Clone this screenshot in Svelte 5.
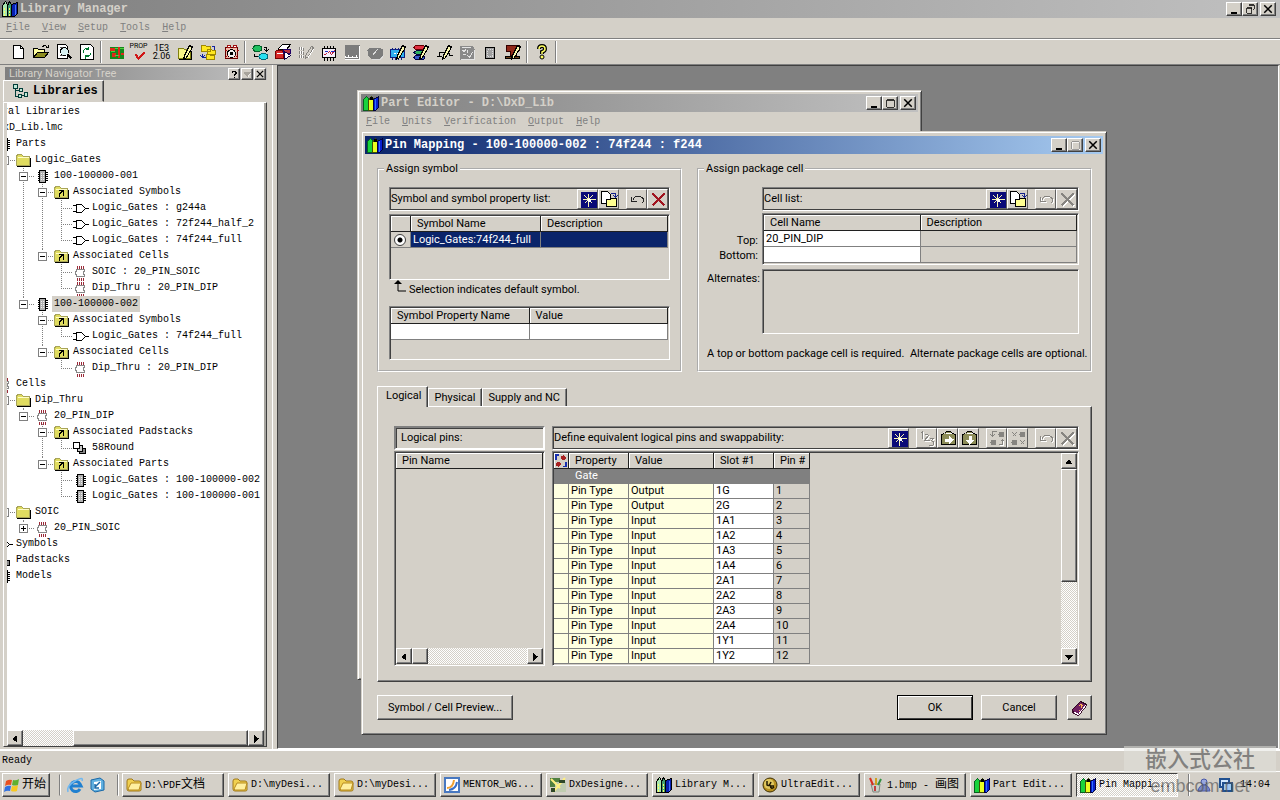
<script lang="ts">
  type Node = { d: number; icon: string; text: string; box?: string; selected?: boolean };

  const tree: Node[] = [
    { d: 0, icon: '', text: 'Central Libraries' },
    { d: 1, icon: '', text: 'DxD_Lib.lmc' },
    { d: 2, icon: 'chip', text: 'Parts' },
    { d: 3, icon: 'folder', text: 'Logic_Gates', box: '-' },
    { d: 4, icon: 'chip', text: '100-100000-001', box: '-' },
    { d: 5, icon: 'link', text: 'Associated Symbols', box: '-' },
    { d: 6, icon: 'gate', text: 'Logic_Gates : g244a' },
    { d: 6, icon: 'gate', text: 'Logic_Gates : 72f244_half_2' },
    { d: 6, icon: 'gate', text: 'Logic_Gates : 74f244_full' },
    { d: 5, icon: 'link', text: 'Associated Cells', box: '-' },
    { d: 6, icon: 'cell', text: 'SOIC : 20_PIN_SOIC' },
    { d: 6, icon: 'cell', text: 'Dip_Thru : 20_PIN_DIP' },
    { d: 4, icon: 'chip', text: '100-100000-002', box: '-', selected: true },
    { d: 5, icon: 'link', text: 'Associated Symbols', box: '-' },
    { d: 6, icon: 'gate', text: 'Logic_Gates : 74f244_full' },
    { d: 5, icon: 'link', text: 'Associated Cells', box: '-' },
    { d: 6, icon: 'cell', text: 'Dip_Thru : 20_PIN_DIP' },
    { d: 2, icon: 'cell', text: 'Cells' },
    { d: 3, icon: 'folder', text: 'Dip_Thru', box: '-' },
    { d: 4, icon: 'cell', text: '20_PIN_DIP', box: '-' },
    { d: 5, icon: 'link', text: 'Associated Padstacks', box: '-' },
    { d: 6, icon: 'pads', text: '58Round' },
    { d: 5, icon: 'link', text: 'Associated Parts', box: '-' },
    { d: 6, icon: 'chip', text: 'Logic_Gates : 100-100000-002' },
    { d: 6, icon: 'chip', text: 'Logic_Gates : 100-100000-001' },
    { d: 3, icon: 'folder', text: 'SOIC', box: '-' },
    { d: 4, icon: 'cell', text: '20_PIN_SOIC', box: '+' },
    { d: 2, icon: 'gate', text: 'Symbols' },
    { d: 2, icon: 'pads', text: 'Padstacks' },
    { d: 2, icon: 'chip', text: 'Models' }
  ];

  // true when another node follows at this depth under the same parent
  function continues(i: number, depth: number) {
    for (let k = i + 1; k < tree.length; k++) {
      if (tree[k].d < depth) return false;
      if (tree[k].d === depth) return true;
    }
    return false;
  }

  const toolGroups = [
    ['new', 'open', 'preview', 'refresh'],
    ['board', 'prop', 'units', 'editFolder', 'copyFolder', 'camera'],
    ['swap', 'import', 'ibis', 'scope', 'plot', 'pie', 'partEdit', 'stackEdit', 'symEdit', 'script', 'cellBox', 'padEdit'],
    ['help']
  ];
  const toolNames: Record<string, string> = {
    new: 'New', open: 'Open', preview: 'Preview', refresh: 'Refresh', board: 'Board', prop: 'Properties',
    units: 'Units', editFolder: 'Edit partitions', copyFolder: 'Copy partitions', camera: 'Snapshot',
    swap: 'Library services', import: 'Import', ibis: 'IBIS editor', scope: 'Simulate', plot: 'Plot',
    pie: 'Analyze', partEdit: 'Part editor', stackEdit: 'Padstack editor', symEdit: 'Symbol editor',
    script: 'Script', cellBox: 'Cell', padEdit: 'Cell editor', help: 'Help'
  };

  const pins = ['1G', '2G', '1A1', '1A2', '1A3', '1A4', '2A1', '2A2', '2A3', '2A4', '1Y1', '1Y2'];

  const tasks = [
    { icon: 'folderBig', text: 'D:\\PDF', cjk: '文档' },
    { icon: 'folderBig', text: 'D:\\myDesi...' },
    { icon: 'folderBig', text: 'D:\\myDesi...' },
    { icon: 'mentor', text: 'MENTOR_WG...' },
    { icon: 'dx', text: 'DxDesigne...' },
    { icon: 'books', text: 'Library M...' },
    { icon: 'ultra', text: 'UltraEdit...' },
    { icon: 'paint', text: '1.bmp - ', cjk: '画图' },
    { icon: 'books2', text: 'Part Edit...' },
    { icon: 'books2', text: 'Pin Mappi...', active: true }
  ];

  const pencil = '<path d="M12 1l3 2-6 10-3 2 1-4z" fill="#fbf8b0" stroke="#000"/><path d="M12 1l3 2" stroke="#000" stroke-width="2"/>';
  const folder = '<path d="M1 4l1-2h4l2 2h6v9H1z" fill="#e0dc60" stroke="#a8a458"/><path d="M2 5h11" stroke="#fffdc8"/><path d="M1 14h14V5" fill="none" stroke="#000"/>';

  const icons: Record<string, string> = {
    folder,
    link: folder + '<path d="M5 6h5v5M10 6l-4 4v2M9 6l-4 4" fill="none" stroke="#000"/>',
    chip: '<rect x="5" y="2" width="6" height="12" fill="#b0b0b0" stroke="#000"/><path d="M3 4h2M3 6h2M3 8h2M3 10h2M3 12h2M11 4h2M11 6h2M11 8h2M11 10h2M11 12h2" stroke="#000"/><path d="M7 4v8M9 4v8" stroke="#eee" stroke-dasharray="1 1"/>',
    gate: '<path d="M0 5h5M0 11h5M13 8h3" stroke="#000"/><path d="M4 4h5l4 4-4 4H4z" fill="#fff" stroke="#000"/>',
    cell: '<path d="M5 1v3M7 1v3M9 1v3M11 1v3M5 13v3M7 13v3M9 13v3M11 13v3" stroke="#9a2a38"/><path d="M4 5h8v2h-1v3h1v2H4v-2H3V7h1z" fill="#fff" stroke="#888"/>',
    pads: '<rect x="7" y="8" width="6" height="5" fill="#888" stroke="#000"/><rect x="5" y="5" width="5" height="6" fill="#ccc" stroke="#000"/><rect x="1" y="2" width="6" height="6" fill="#fff" stroke="#000"/>',
    libs: '<path d="M1 1h4v4H1zM7 5h3v3H7zM12 9h3v4h-3zM6 11h3v3H6z" fill="#bfe8d8" stroke="#003c38"/><path d="M3 5v8h3M3 7h4M9 12h3" fill="none" stroke="#003c38"/>',
    books: '<path d="M0 4l3-4 2 3v12H0z" fill="#a8e8b0" stroke="#000"/><path d="M5 4l2-4 2 3v12H5z" fill="#3f9c70" stroke="#000"/><path d="M7 6v8M2 6v8" stroke="#ffff60" stroke-dasharray="2 1"/><path d="M9 3l6-2v11l-3 3H9z" fill="#0820b0" stroke="#000"/><path d="M13 3v10" stroke="#4070ff"/>',
    books2: '<path d="M0 4l3-3 2 2v12H0z" fill="#19d33c" stroke="#086020"/><path d="M5 5l3-4 2 2v12H5z" fill="#eaff20" stroke="#405000"/><path d="M6 1h3v3H6z" fill="#000"/><path d="M10 4l5-3v11l-3 3h-2z" fill="#0820d0" stroke="#000040"/><path d="M12 3v11" stroke="#3070ff"/>',
    new: '<path d="M3 1h7l3 3v10H3z" fill="#fff" stroke="#000"/><path d="M10 1v3h3" fill="none" stroke="#000"/>',
    open: '<path d="M0 13V4h4l1 1h6v3" fill="#ffffa0" stroke="#000"/><path d="M0 13l4-5h11l-4 5z" fill="#8c8c20" stroke="#000"/><path d="M9 2q3-2 5 1M15 0v3h-3" fill="none" stroke="#000"/>',
    preview: '<path d="M1 0h8l2 2v12H1z" fill="#fff" stroke="#000"/><path d="M3 3h4M3 5h2M3 11h3" stroke="#555"/><circle cx="8" cy="7" r="4" fill="#d8f0f0" stroke="#000"/><path d="M11 10l4 4" stroke="#000" stroke-width="2"/>',
    refresh: '<path d="M1 0h10l3 3v12H1z" fill="#fff" stroke="#000"/><path d="M4 8V6q2-3 5-1M9 2v3H6M11 8v2q-2 3-5 1M6 14v-3h3" fill="none" stroke="#007830"/>',
    board: '<path d="M1 2h14v12H1z" fill="#15881c"/><path d="M1 3h5v3H1zM9 2h2v11H9zM3 8h4v4H3zM12 8h3v2h-3z" fill="#e02818"/><path d="M6 4h3M6 11h4M11 4h4M2 7h4" stroke="#50d040"/>',
    prop: '<path d="M4 10l3 4 6-6" fill="none" stroke="#d01818" stroke-width="2"/>',
    units: '',
    editFolder: '<path d="M1 4h5l1 1h6v9H1z" fill="#f8f488" stroke="#808010"/><path d="M1 15h13V6" stroke="#000" fill="none"/>' + pencil,
    copyFolder: '<path d="M1 1h4l1 1h4v5H1zM7 5h4l1 1h3v4H7zM6 10h3l1 1h4v4H6z" fill="#ffe820" stroke="#a08800"/><path d="M11 2h3v3M2 9v4h3M0 11l2 2 2-2" fill="none" stroke="#1020a0"/>',
    camera: '<path d="M2 3h12v11H2z" fill="#f0b8a8" stroke="#600"/><circle cx="8" cy="9" r="4" fill="#eee" stroke="#000"/><circle cx="8" cy="9" r="1.5" fill="#000"/><path d="M4 1h3v2H4zM10 1h3v2h-3zM1 6h2M13 6h2M1 14l3-3M15 14l-3-3" stroke="#a01010" fill="#fff"/>',
    swap: '<ellipse cx="5" cy="4" rx="4.5" ry="3" fill="#20c060" stroke="#006028"/><ellipse cx="11" cy="12" rx="4.5" ry="3" fill="#28e0f0" stroke="#006878"/><path d="M11 3h3v3M5 12H2V9M12 5l2 2 2-2" fill="none" stroke="#000"/>',
    import: '<path d="M3 4l4-4h8l-4 5H3z" fill="#fff" stroke="#000"/><path d="M0 7q4-3 8 0v7H0z" fill="#d82828" stroke="#700"/><path d="M1 9h6" stroke="#fff"/><path d="M8 5h7v4H8z" fill="#b83040" stroke="#206"/><path d="M9 7l6 4-6 4z" fill="#fff" stroke="#104"/>',
    ibis: '<path d="M1 2v12M3 2v12M5 3v10" stroke="#868480" stroke-dasharray="3 1"/><path d="M2 2v12M4 2v12" stroke="#fff" stroke-dasharray="3 1"/><path d="M13 2l2 1-5 9-3 2v-3z" fill="#d4d0c8" stroke="#868480"/><path d="M9 14l6-9" stroke="#fff"/>',
    scope: '<path d="M3 1v3M6 1v3M9 1v3M12 1v3M3 13v3M6 13v3M9 13v3M12 13v3" stroke="#000"/><path d="M1 4h13v9H1z" fill="#f4f0fa" stroke="#000"/><path d="M3 10l3-1 2-2 2 3 3-4" fill="none" stroke="#c02040"/><path d="M3 7h3M9 7h4" stroke="#2030c0"/>',
    plot: '<path d="M0 0h15v15H0z" fill="#7c7c7c"/><path d="M1 13v-2M4 13v-3M6 13v-1M8 13v-2M10 13v-1M12 13v-3M1 13h12M0 15h15V1" fill="none" stroke="#fff"/>',
    pie: '<path d="M2 3h10l3 2v6l-3 4H4l-4-4V6z" fill="#7c7c7c"/><path d="M5 11l5-6M4 15h9l3-4" fill="none" stroke="#ddd"/>',
    partEdit: '<path d="M2 3v12M5 3v12M8 3v12M11 3v12" stroke="#102080"/><path d="M0 5h14v8H0z" fill="#30b0f0" stroke="#102080"/><path d="M3 9h8" stroke="#fff" stroke-dasharray="2 1"/>' + pencil,
    stackEdit: '<ellipse cx="6" cy="3" rx="5.5" ry="2.5" fill="#e03040" stroke="#600"/><ellipse cx="6" cy="8" rx="5.5" ry="2" fill="#30b060" stroke="#004"/><ellipse cx="6" cy="13" rx="5.5" ry="2.5" fill="#3858c8" stroke="#004"/>' + pencil,
    symEdit: '<path d="M0 12h5M3 12V8h4M11 9h2v2h3" fill="none" stroke="#000"/>' + pencil,
    script: '<path d="M0 1h13l2 4v10H1z" fill="#8a8a8a"/><path d="M2 3h9M3 6l2 1 1-2M8 5v3M3 10h3M8 11l2 2 3-5M15 5v10H1" fill="none" stroke="#e4e4e4"/>',
    cellBox: '<path d="M3 3h9v11H3z" fill="#a0a0a0" stroke="#000"/><path d="M5 5h5v7H5z" fill="none" stroke="#ddd" stroke-dasharray="1 1"/>',
    padEdit: '<path d="M1 1h13v5h-3v5H5V7H1z" fill="#902818" stroke="#300"/><path d="M0 12h14v2H0z" fill="#704018" stroke="#000"/>' + pencil,
    help: '<path d="M5 5q0-3 3-3t3 3q0 2-3 3v2" fill="none" stroke="#000" stroke-width="4"/><circle cx="8" cy="13" r="2" fill="#ffff60" stroke="#000"/><path d="M5 5q0-3 3-3t3 3q0 2-3 3v2" fill="none" stroke="#ffff60" stroke-width="1.5"/>',
    star: '<path d="M0 0h16v16H0z" fill="#0a0a78"/><path d="M8 2v13M2 8h13M4 4l8 8M12 4l-8 8" stroke="#f8f4b0"/><path d="M7 7h3v3H7z" fill="#fff"/>',
    copy: '<path d="M0 0h6l3 3v9H0z" fill="#fff" stroke="#000"/><path d="M5 8h4l1-1h5v8H5z" fill="#ffff90" stroke="#000"/><path d="M9 2h5v4M12 4l2 2 2-2" fill="none" stroke="#10208c"/>',
    undo: '<path d="M3 9q3-6 8-4t2 7M2 5v5h5" fill="none" stroke="#222"/>',
    undoOff: '<path d="M4 10q3-6 8-4t2 7M3 6v5h5" fill="none" stroke="#fff"/><path d="M3 9q3-6 8-4t2 7M2 5v5h5" fill="none" stroke="#868480"/>',
    del: '<path d="M2 2l12 12M14 2L2 14" stroke="#a01420" stroke-width="2"/>',
    delOff: '<path d="M3 3l12 12M15 3L3 15" stroke="#fff" stroke-width="1.5"/><path d="M2 2l12 12M14 2L2 14" stroke="#868480" stroke-width="1.5"/>',
    numOff: '<g fill="none"><path d="M1 3l2-2v7M5 5q3-3 4 0l-4 5h5M10 8h4l-2 2q4 2 1 5h-4" stroke="#fff" transform="translate(1 1)"/><path d="M1 3l2-2v7M5 5q3-3 4 0l-4 5h5M10 8h4l-2 2q4 2 1 5h-4" stroke="#868480"/></g>',
    clipR: '<path d="M1 4l3-1 2-2h4l2 2 3 1v10H1z" fill="#8c8c58" stroke="#000"/><path d="M5 3h6" stroke="#fff"/><path d="M4 8h4V5l5 4-5 5v-3H4z" fill="#fff"/>',
    clipD: '<path d="M1 4l3-1 2-2h4l2 2 3 1v10H1z" fill="#8c8c58" stroke="#000"/><path d="M5 3h6" stroke="#fff"/><path d="M7 5h3v4h3l-5 5-4-5h3z" fill="#fff"/>',
    swapOff: '<circle cx="12" cy="4" r="3" fill="#868480"/><circle cx="4" cy="12" r="3" fill="#868480"/><path d="M7 1H3v5M1 4l2 2 2-2M9 14h4V9M11 11l2-2 2 2" fill="none" stroke="#868480"/><path d="M10 15h4v-5" fill="none" stroke="#fff"/>',
    unswapOff: '<circle cx="12" cy="4" r="3" fill="#868480"/><circle cx="4" cy="12" r="3" fill="#868480"/><path d="M2 2l4 4M6 2L2 6M10 10l4 4M14 10l-4 4" stroke="#868480"/>',
    equiv: '<circle cx="11" cy="4" r="3" fill="#a82020"/><circle cx="5" cy="12" r="3" fill="#a82020"/><path d="M6 1H2v6M10 15h4V9" fill="none" stroke="#1830b0" stroke-width="2"/>',
    bookHelp: '<path d="M1 9l8-8 6 3-8 10-5-2z" fill="#702060" stroke="#300820"/><path d="M1 11l1 2 5 2 8-10V4" fill="none" stroke="#401030"/><path d="M3 12l4 2 7-9" fill="none" stroke="#fff"/><path d="M7 6l2-2 2 1-2 3M8 9v1" fill="none" stroke="#ffb050"/>',
    flag: '<path d="M2 4q3-2 6-1L7 8Q4 7 1 9z" fill="#e85020"/><path d="M9 3q3 1 6-1l-1 6q-3 1-6 0z" fill="#60b030"/><path d="M1 10q3-2 6-1l-1 5Q3 13 0 15z" fill="#3070e0"/><path d="M8 9q3 1 6-1l-1 6q-3 1-6 0z" fill="#f8c820"/>',
    ie: '<path d="M13 12a5 5 0 1 1 0-5l1 2H5" fill="none" stroke="#2080d0" stroke-width="3"/><path d="M1 15Q-1 9 8 4t7 0" fill="none" stroke="#70b8f0" stroke-width="1.5"/>',
    desk: '<path d="M2 3l9-2 4 3v9l-9 2-4-3z" fill="#60b0e0" stroke="#1868a8"/><path d="M5 5l7-1v8l-7 1z" fill="#fff"/><path d="M6 10l5-5M6 7v4h4" fill="none" stroke="#1868a8" stroke-width="1.5"/>',
    folderBig: '<path d="M1 4q0-2 2-2h3l2 2h5q2 0 2 2v7q0 1-2 1H3q-2 0-2-2z" fill="#f0d050" stroke="#a07818"/><path d="M2 12l3-6h10l-2 7H3z" fill="#fff0a0" stroke="#b88c20"/>',
    mentor: '<path d="M1 1h14v14H1z" fill="#fff" stroke="#4878c0" stroke-width="2"/><path d="M3 11Q9 11 10 3" fill="none" stroke="#f0a030" stroke-width="2"/><path d="M5 13q7-1 8-8" fill="none" stroke="#3870c8" stroke-width="2"/>',
    dx: '<path d="M0 1h10v9H0z" fill="#508040"/><path d="M5 5h11v10H5z" fill="#c0ccb0"/><path d="M1 2l9 9M15 1L3 15" stroke="#fff080" stroke-width="2"/><path d="M9 3h6v3H9zM1 11h4v4H1z" fill="#304828"/>',
    ultra: '<circle cx="8" cy="8" r="7" fill="#b89020" stroke="#403000"/><circle cx="7" cy="7" r="5" fill="#e0c860"/><path d="M5 4v4q2 2 4-3M8 8q1 5 4 2M9 9h3" fill="none" stroke="#201800" stroke-width="1.5"/>',
    paint: '<path d="M3 7h9l-1 8H5z" fill="#c8d0c8" stroke="#808880"/><path d="M5 8L2 1" stroke="#d83020" stroke-width="2"/><path d="M8 8V1" stroke="#d0a020" stroke-width="2"/><path d="M10 8l3-6" stroke="#309040" stroke-width="2"/><path d="M7 9v5" stroke="#c04040" stroke-width="2"/>',
    tray1: '<circle cx="8" cy="5" r="3" fill="#98a8e0" stroke="#4858a8"/><path d="M2 14q1-6 6-6t6 6z" fill="#7888c8" stroke="#4858a8"/>',
    tray2: '<path d="M2 2h9v8H2z" fill="#d0e8ff" stroke="#205090" stroke-width="2"/><path d="M5 6h9v8H5z" fill="#a0c8f0" stroke="#205090" stroke-width="2"/>',
    min: '<path d="M4 12h7v2H4z"/>',
    max: '<path d="M3 3h10v10H3z" fill="none" stroke="#000"/><path d="M3 4h10" stroke="#000"/>',
    maxOff: '<path d="M4 4h10v10H4z" fill="none" stroke="#fff"/><path d="M3 3h10v10H3z" fill="none" stroke="#808080"/>',
    restore: '<path d="M6 2h7v6h-2M3 6h7v7H3z" fill="none" stroke="#000"/><path d="M6 3h7M3 7h7" stroke="#000"/>',
    close: '<path d="M3 3l10 10M13 3L3 13" stroke="#000" stroke-width="2"/>',
    up: '<path d="M8 5l5 6H3z"/>',
    down: '<path d="M3 6h10l-5 6z"/>',
    downOff: '<path d="M2 5h12l-6 7z" fill="#a8a49c"/><path d="M14 6l-6 7" stroke="#fff"/>',
    left: '<path d="M11 3v10L5 8z"/>',
    right: '<path d="M6 3v10l6-5z"/>',
    ask: '<path d="M5 6q0-3 3-3t3 3q0 1-3 3v2M8 12v2" fill="none" stroke="#000" stroke-width="2"/>'
  };

  // photographic style icons keep smooth edges, the rest is pixel art
  const smooth = ['flag', 'ie', 'desk', 'folderBig', 'mentor', 'dx', 'ultra', 'paint', 'tray1', 'tray2', 'close', 'help'];

  let tab = $state('Logical');
</script>

{#snippet icon(name: string)}
  <svg class="icon" class:smooth={smooth.includes(name)} viewBox={smooth.includes(name) ? '0 0 16 16' : '-0.5 -0.5 16 16'} aria-hidden="true">{@html icons[name]}</svg>
{/snippet}

{#snippet caption(names: string[])}
  <div class="caption">
    {#each names as n}
      <button aria-label={n}>{@render icon(n)}</button>
    {/each}
  </div>
{/snippet}

{#snippet bar(groups: string[][])}
  {#each groups as group}
    <div class="bar-group">
      {#each group as n}
        <button class="bar-button" aria-label={n}>{@render icon(n)}</button>
      {/each}
    </div>
  {/each}
{/snippet}

<div class="screen">
  <header class="title idle main-title">
    {@render icon('books')}
    <h1>Library Manager</h1>
    {@render caption(['min', 'restore', 'close'])}
  </header>
  <nav class="menu">
    {#each ['File', 'View', 'Setup', 'Tools', 'Help'] as m}
      <button><u>{m[0]}</u>{m.slice(1)}</button>
    {/each}
  </nav>
  <div class="toolbar">
    {#each toolGroups as group}
      <div class="tool-group">
        {#each group as t}
          <button aria-label={toolNames[t]}>
            {#if t === 'prop'}
              <span class="tiny">PROP</span>
            {:else if t === 'units'}
              <span class="two-line">1E3<br />2.06</span>
            {/if}
            {#if t !== 'units'}{@render icon(t)}{/if}
          </button>
        {/each}
      </div>
    {/each}
  </div>

  <div class="middle">
    <aside class="dock">
      <div class="dock-title">
        <span>Library Navigator Tree</span>
        {@render caption(['ask', 'downOff', 'close'])}
      </div>
      <button class="dock-tab">{@render icon('libs')}Libraries</button>
      <div class="dock-page">
        <div class="tree">
          {#each tree as node, i}
            <div class="node">
              {#each Array(node.d) as _, k}
                <span class="guide" class:line={k > 1 && continues(i, k)}></span>
              {/each}
              <span class="joint" class:more={continues(i, node.d)} class:root={node.d < 3}>
                {#if node.box}<span class="box" class:plus={node.box === '+'}></span>{/if}
              </span>
              {@render icon(node.icon)}
              <span class="label" class:selected={node.selected}>{node.text}</span>
            </div>
          {/each}
        </div>
        <div class="scroll-h">
          <button aria-label="Scroll left">{@render icon('left')}</button>
          <div class="track"><div class="thumb dock-thumb"></div></div>
          <button aria-label="Scroll right">{@render icon('right')}</button>
        </div>
      </div>
    </aside>

    <main class="workspace">
      <section class="window editor">
        <div class="title idle">
          {@render icon('books2')}
          <h2>Part Editor - D:\DxD_Lib</h2>
          {@render caption(['min', 'max', 'close'])}
        </div>
        <nav class="menu">
          {#each ['File', 'Units', 'Verification', 'Output', 'Help'] as m}
            <button><u>{m[0]}</u>{m.slice(1)}</button>
          {/each}
        </nav>
      </section>

      <section class="window mapping">
        <div class="title">
          {@render icon('books2')}
          <h2>Pin Mapping - 100-100000-002 : 74f244 : f244</h2>
          {@render caption(['min', 'maxOff', 'close'])}
        </div>
        <div class="body">
          <div class="groups">
            <fieldset>
              <legend>Assign symbol</legend>
              <div class="sunken bar">
                <span>Symbol and symbol property list:</span>
                {@render bar([['star', 'copy'], ['undo', 'del']])}
              </div>
              <div class="sunken symbols">
                <table>
                  <colgroup><col class="c-radio" /><col class="c-name" /><col /></colgroup>
                  <thead><tr><th></th><th>Symbol Name</th><th>Description</th></tr></thead>
                  <tbody>
                    <tr class="picked">
                      <td class="pick"><input type="radio" name="default" aria-label="Default symbol" checked /></td>
                      <td>Logic_Gates:74f244_full</td>
                      <td></td>
                    </tr>
                  </tbody>
                </table>
              </div>
              <div class="hint">
                <svg viewBox="0 0 12 14" aria-hidden="true"><path d="M4 1v10h8" fill="none" stroke="#000" stroke-width="1" /><path d="M4 0l4 4H0z" /></svg>
                Selection indicates default symbol.
              </div>
              <div class="sunken props">
                <table>
                  <thead><tr><th>Symbol Property Name</th><th>Value</th></tr></thead>
                  <tbody><tr class="white"><td></td><td></td></tr></tbody>
                </table>
              </div>
            </fieldset>

            <fieldset class="package">
              <legend>Assign package cell</legend>
              <div class="package-grid">
                <span></span>
                <div class="sunken bar">
                  <span>Cell list:</span>
                  {@render bar([['star', 'copy'], ['undoOff', 'delOff']])}
                </div>
                <div class="row-labels"><span>Top:</span><span>Bottom:</span></div>
                <div class="sunken cells">
                  <table>
                    <thead><tr><th>Cell Name</th><th>Description</th></tr></thead>
                    <tbody>
                      <tr><td class="white">20_PIN_DIP</td><td></td></tr>
                      <tr><td class="white"></td><td></td></tr>
                    </tbody>
                  </table>
                </div>
                <span class="alt-label">Alternates:</span>
                <div class="sunken alternates"></div>
              </div>
              <p>A top or bottom package cell is required.&nbsp; Alternate package cells are optional.</p>
            </fieldset>
          </div>

          <div class="tabs" role="tablist">
            {#each ['Logical', 'Physical', 'Supply and NC'] as t}
              <button role="tab" aria-selected={tab === t} class:current={tab === t} onclick={() => (tab = t)}>{t}</button>
            {/each}
          </div>
          <div class="panel">
            <div class="pins">
              <div class="sunken bar logical">Logical pins:</div>
              <div class="sunken pin-list">
                <table><thead><tr><th>Pin Name</th></tr></thead></table>
                <div class="scroll-h">
                  <button aria-label="Scroll left">{@render icon('left')}</button>
                  <div class="track"><div class="thumb pin-thumb"></div></div>
                  <button aria-label="Scroll right">{@render icon('right')}</button>
                </div>
              </div>
            </div>
            <div class="define">
              <div class="sunken bar">
                <span>Define equivalent logical pins and swappability:</span>
                {@render bar([['star'], ['numOff', 'clipR', 'clipD'], ['swapOff', 'unswapOff'], ['undoOff', 'delOff']])}
              </div>
              <div class="sunken slots">
                <table>
                  <colgroup><col class="c-mark" /><col class="c-prop" /><col class="c-value" /><col class="c-slot" /><col class="c-pin" /></colgroup>
                  <thead>
                    <tr><th class="mark">{@render icon('equiv')}</th><th>Property</th><th>Value</th><th>Slot #1</th><th>Pin #</th></tr>
                  </thead>
                  <tbody>
                    <tr class="gate-row"><td></td><td colspan="4">Gate</td></tr>
                    {#each pins as pin, i}
                      <tr>
                        <td class="cream"></td>
                        <td class="cream">Pin Type</td>
                        <td class="cream">{i < 2 ? 'Output' : 'Input'}</td>
                        <td class="white">{pin}</td>
                        <td>{i + 1}</td>
                      </tr>
                    {/each}
                  </tbody>
                </table>
                <div class="scroll-v">
                  <button aria-label="Scroll up">{@render icon('up')}</button>
                  <div class="track"><div class="thumb"></div></div>
                  <button aria-label="Scroll down">{@render icon('down')}</button>
                </div>
              </div>
            </div>
          </div>

          <div class="actions">
            <button class="push wide">Symbol / Cell Preview...</button>
            <span class="spacer"></span>
            <button class="push default">OK</button>
            <button class="push">Cancel</button>
            <button class="push square" aria-label="Help">{@render icon('bookHelp')}</button>
          </div>
        </div>
      </section>
    </main>
  </div>

  <div class="status">Ready</div>
  <footer class="taskbar">
    <button class="start">{@render icon('flag')}开始</button>
    <div class="quick">
      <button aria-label="Internet Explorer">{@render icon('ie')}</button>
      <button aria-label="Show desktop">{@render icon('desk')}</button>
    </div>
    <div class="tasks">
      {#each tasks as t}
        <button class:active={t.active}>{@render icon(t.icon)}<span>{t.text}{#if t.cjk}<span class="cjk">{t.cjk}</span>{/if}</span></button>
      {/each}
    </div>
    <div class="tray">
      {@render icon('tray1')}
      {@render icon('tray2')}
      <time>14:04</time>
    </div>
  </footer>
  <div class="watermark">
    <strong>嵌入式公社</strong>
    <span>embcom.net</span>
  </div>
</div>

<style>
  :global(body) {
    background: #d4d0c8;
  }
  .screen {
    --face: #d4d0c8;
    --mono: "Liberation Mono", "Noto Sans CJK SC", monospace;
    --sans: Roboto, "Liberation Sans", sans-serif;
    position: relative;
    display: flex;
    flex-direction: column;
    min-height: 100vh;
    background: var(--face);
    color: #000;
    font: 10px/16px var(--mono);
    overflow: hidden;
  }
  .screen :global(*) {
    box-sizing: border-box;
  }
  button {
    margin: 0;
    padding: 0;
    border: none;
    border-radius: 0;
    background: var(--face);
    color: inherit;
    font: inherit;
  }
  h1, h2, p {
    margin: 0;
    font-size: 12px;
  }
  .icon {
    width: 16px;
    height: 16px;
    flex: none;
    display: block;
    overflow: visible;
    shape-rendering: crispEdges;
  }
  .icon.smooth {
    shape-rendering: auto;
  }

  /* title bars */
  .title {
    display: flex;
    align-items: center;
    height: 18px;
    padding: 0 2px;
    background: linear-gradient(to right, #0a246a, #a6caf0);
    color: #fff;
  }
  .title.idle {
    background: linear-gradient(to right, #808080, #c0c0c0);
    color: #d4d0c8;
  }
  .main-title {
    padding-right: 4px;
  }
  .title h1, .title h2 {
    flex: 1;
    padding-left: 2px;
    font-weight: 700;
    line-height: 18px;
    white-space: nowrap;
  }
  .caption {
    display: flex;
  }
  .caption button {
    width: 16px;
    height: 14px;
    display: flex;
    align-items: center;
    justify-content: center;
    border: 1px solid;
    border-color: #fff #404040 #404040 #fff;
    box-shadow: inset -1px -1px #808080;
  }
  .caption button:last-child {
    margin-left: 2px;
  }
  .caption .icon {
    width: 12px;
    height: 12px;
  }
  .menu {
    display: flex;
    align-items: center;
    gap: 12px;
    height: 20px;
    padding: 0 6px;
    color: #808080;
  }

  /* toolbar */
  .toolbar {
    display: flex;
    align-items: center;
    height: 27px;
    padding-left: 6px;
    border-top: 1px solid #808080;
    border-bottom: 1px solid #808080;
    box-shadow: inset 0 1px #fff;
  }
  .tool-group {
    display: flex;
    align-items: center;
    height: 22px;
    margin-right: 3px;
    padding-right: 2px;
    border-right: 1px solid #808080;
    box-shadow: 1px 0 #fff;
  }
  .tool-group button {
    width: 23px;
    height: 22px;
    position: relative;
    display: flex;
    align-items: center;
    justify-content: center;
  }
  .tiny, .two-line {
    font: 7px/8px var(--sans);
    text-align: center;
  }
  .tiny {
    position: absolute;
    top: 1px;
    left: 0;
    width: 100%;
  }
  .two-line {
    font: 9px/8px var(--sans);
  }

  /* dock */
  .middle {
    flex: 1;
    display: flex;
  }
  .dock {
    width: 273px;
    flex: none;
    display: flex;
    flex-direction: column;
    padding: 2px 5px 2px 3px;
    border-right: 1px solid #fff;
    font-family: var(--mono);
  }
  .dock-title {
    display: flex;
    align-items: center;
    height: 13px;
    margin-left: 2px;
    padding: 0 1px 0 4px;
    background: linear-gradient(to right, #808080, #c0c0c0);
    color: #d4d0c8;
    font: 11px/13px var(--sans);
  }
  .dock-title span {
    flex: 1;
  }
  .dock-title .caption {
    gap: 1px;
  }
  .dock-title .caption button {
    width: 12px;
    height: 12px;
    margin: 0;
  }
  .dock-title .caption .icon {
    width: 10px;
    height: 10px;
  }
  .dock-tab {
    align-self: flex-start;
    display: flex;
    align-items: center;
    gap: 5px;
    height: 22px;
    padding: 0 5px 0 8px;
    border: 1px solid;
    border-color: #fff #404040 transparent #fff;
    box-shadow: inset -1px 0 #808080;
    font-size: 12px;
    font-weight: 700;
  }
  .dock-page {
    flex: 1;
    display: flex;
    flex-direction: column;
    padding: 0 2px 0 3px;
    border: 1px solid;
    border-color: #fff #404040 #404040 #fff;
    box-shadow: inset -2px 0 #a8a6a0;
    overflow: hidden;
  }
  .tree {
    flex: 1;
    background: #fff;
    overflow: hidden;
    padding-top: 1px;
  }
  .node {
    display: flex;
    align-items: center;
    height: 16px;
    margin-left: -64px;
    white-space: nowrap;
  }
  .guide {
    width: 19px;
    height: 16px;
    flex: none;
  }
  .guide.line {
    background: linear-gradient(#808080 50%, transparent 50%) 4px 0 / 1px 2px repeat-y;
  }
  .joint {
    position: relative;
    width: 15px;
    height: 16px;
    flex: none;
    background:
      linear-gradient(#808080 50%, transparent 50%) 4px 0 / 1px 2px repeat-y,
      linear-gradient(to right, #808080 50%, transparent 50%) 4px 8px / 2px 1px repeat-x;
    clip-path: polygon(4px 0, 5px 0, 5px 4px, 100% 4px, 100% 9px, 4px 9px);
  }
  .joint.more {
    clip-path: polygon(4px 0, 5px 0, 5px 4px, 100% 4px, 100% 13px, 5px 13px, 5px 16px, 4px 16px);
  }
  .joint:has(.box) {
    clip-path: none;
    background:
      linear-gradient(#808080 50%, transparent 50%) 4px 0 / 1px 4px no-repeat,
      linear-gradient(to right, #808080 50%, transparent 50%) 10px 8px / 2px 1px repeat-x;
  }
  .joint.more:has(.box) {
    background:
      linear-gradient(#808080 50%, transparent 50%) 4px 0 / 1px 2px repeat-y,
      linear-gradient(to right, #808080 50%, transparent 50%) 10px 8px / 2px 1px repeat-x;
  }
  .joint.root {
    visibility: hidden;
  }
  .box {
    position: absolute;
    left: 0;
    top: 4px;
    width: 9px;
    height: 9px;
    border: 1px solid #808080;
    background: linear-gradient(#000, #000) center / 5px 1px no-repeat, #fff;
  }
  .box.plus {
    background: linear-gradient(#000, #000) center / 5px 1px no-repeat, linear-gradient(#000, #000) center / 1px 5px no-repeat, #fff;
  }
  .label {
    margin-left: 2px;
    padding: 0 2px;
    line-height: 16px;
  }
  .label.selected {
    background: var(--face);
  }

  /* scroll bars */
  .scroll-h, .scroll-v {
    display: flex;
    flex: none;
  }
  .scroll-h {
    height: 16px;
  }
  .scroll-v {
    flex-direction: column;
    width: 16px;
    margin-left: auto;
  }
  .scroll-h button, .scroll-v button, .thumb {
    width: 16px;
    height: 16px;
    border: 1px solid;
    border-color: #fff #404040 #404040 #fff;
    box-shadow: inset -1px -1px #808080;
    background: var(--face);
  }
  .scroll-h .icon, .scroll-v .icon {
    width: 13px;
    height: 13px;
  }
  .track {
    flex: 1;
    background: repeating-conic-gradient(#fff 0 25%, #d4d0c8 0 50%) 0 0 / 2px 2px;
  }
  .dock-thumb {
    width: 78%;
    margin-left: 22%;
  }
  .scroll-v .thumb {
    height: 63%;
  }

  /* windows */
  .workspace {
    flex: 1;
    position: relative;
    margin: 0 1px 0 4px;
    border: 1px solid;
    border-color: #404040 #fff #fff #404040;
    background: #808080;
    overflow: hidden;
  }
  .window {
    position: absolute;
    padding: 3px;
    border: 1px solid;
    border-color: #d4d0c8 #404040 #404040 #d4d0c8;
    box-shadow: inset 1px 1px #fff, inset -1px -1px #808080;
    background: var(--face);
  }
  .editor {
    left: 79px;
    top: 24px;
    width: 565px;
    min-height: 590px;
  }
  .editor .menu {
    padding: 0 5px;
  }
  .mapping {
    left: 83px;
    top: 65px;
    width: 746px;
    padding-top: 4px;
    font: 11px/14px var(--sans);
  }
  .mapping .title {
    font-family: var(--mono);
  }
  .body {
    padding: 8px 11px 11px 12px;
  }
  .sunken {
    padding: 1px;
    border: 1px solid;
    border-color: #808080 #fff #fff #808080;
    box-shadow: inset 1px 1px #404040;
  }
  .groups {
    display: grid;
    grid-template-columns: 305fr 395fr;
    gap: 15px;
  }
  fieldset {
    min-width: 0;
    margin: 0;
    padding: 11px 10px 10px;
    border: 2px groove #fff;
  }
  legend {
    margin-left: -5px;
    padding: 0 2px;
    line-height: 14px;
  }
  .package {
    padding: 11px 11px 8px 8px;
  }
  .package legend {
    margin-left: -3px;
  }
  .bar {
    display: flex;
    align-items: center;
    height: 24px;
    box-shadow: inset 0 0 0 1px #404040;
  }
  .bar > span {
    flex: 1;
    white-space: nowrap;
  }
  .bar-group {
    display: flex;
    margin-left: 7px;
  }
  .bar-button {
    width: 21px;
    height: 20px;
    display: flex;
    align-items: center;
    justify-content: center;
    border: 1px solid;
    border-color: #fff #606060 #606060 #fff;
  }
  table {
    width: 100%;
    table-layout: fixed;
    border-spacing: 0;
  }
  th, td {
    height: 16px;
    padding: 0 2px;
    border: 0 solid #808080;
    border-width: 0 1px 1px 0;
    line-height: 14px;
    text-align: left;
    font-weight: 400;
    white-space: nowrap;
    overflow: hidden;
  }
  th {
    padding-left: 6px;
    border-color: #202020;
    box-shadow: inset 1px 1px #fff;
  }
  .white, .white td {
    background: #fff;
  }
  .cream {
    background: #ffffe1;
  }
  .symbols {
    height: 66px;
    margin-top: 3px;
  }
  .c-radio {
    width: 20px;
  }
  .c-name {
    width: 130px;
  }
  .picked td {
    background: #0a246a;
    color: #fff;
  }
  .picked .pick {
    padding: 1px 3px;
    background: var(--face);
  }
  input[type='radio'] {
    appearance: none;
    display: block;
    width: 12px;
    height: 12px;
    margin: 0;
    border: 1px solid #404040;
    border-radius: 50%;
    background: radial-gradient(#000 2px, #fff 3px);
  }
  .hint {
    display: flex;
    align-items: center;
    gap: 3px;
    height: 20px;
    margin-bottom: 6px;
    padding-left: 5px;
  }
  .hint svg {
    width: 12px;
    height: 14px;
    align-self: flex-start;
  }
  .props {
    height: 54px;
  }
  .package-grid {
    display: grid;
    grid-template-columns: 51px 1fr;
    column-gap: 4px;
  }
  .row-labels {
    display: flex;
    flex-direction: column;
    margin-top: 22px;
    line-height: 15px;
    text-align: right;
  }
  .cells {
    margin-top: 2px;
  }
  .alternates {
    height: 65px;
    margin-top: 4px;
  }
  .alt-label {
    margin-top: 7px;
  }
  .package p {
    margin-top: 13px;
    font-size: 11px;
    white-space: nowrap;
  }

  /* tabs */
  .tabs {
    display: flex;
    align-items: flex-end;
    margin-top: 14px;
    height: 20px;
  }
  .tabs button {
    position: relative;
    height: 18px;
    padding: 0 6px 0 5px;
    border: 1px solid;
    border-color: #fff #404040 transparent #fff;
    border-bottom: none;
    box-shadow: inset -1px 0 #808080;
  }
  .tabs .current {
    height: 21px;
    margin-bottom: -1px;
    padding: 0 6px 2px 8px;
    z-index: 1;
  }
  .panel {
    display: flex;
    gap: 7px;
    padding: 19px 12px 15px 16px;
    border: 1px solid;
    border-color: #fff #404040 #404040 #fff;
    box-shadow: inset -1px -1px #808080;
  }
  .pins {
    width: 151px;
    flex: none;
    display: flex;
    flex-direction: column;
  }
  .define {
    flex: 1;
    min-width: 0;
    display: flex;
    flex-direction: column;
  }
  .logical {
    padding-left: 5px;
    border-width: 2px;
    box-shadow: inset 1px 1px #404040;
  }
  .pin-list {
    flex: 1;
    display: flex;
    flex-direction: column;
    justify-content: space-between;
    margin-top: 1px;
  }
  .pin-thumb {
    width: 16px;
  }
  .slots {
    display: flex;
    margin-top: 1px;
  }
  .slots table {
    width: 256px;
    flex: none;
  }
  .slots td {
    height: 15px;
  }
  .slots .mark {
    padding: 0;
  }
  .mark .icon {
    width: 13px;
    height: 13px;
  }
  .slots .gate-row td {
    padding-left: 6px;
    border-color: #808080;
    background: #808080;
    color: #fff;
  }
  .c-mark {
    width: 15px;
  }
  .c-prop, .c-slot {
    width: 60px;
  }
  .c-value {
    width: 85px;
  }
  .c-pin {
    width: 36px;
  }
  .actions {
    display: flex;
    gap: 8px;
    margin-top: 13px;
  }
  .spacer {
    flex: 1;
  }
  .push {
    width: 76px;
    height: 25px;
    border: 1px solid;
    border-color: #fff #404040 #404040 #fff;
    box-shadow: inset -1px -1px #808080;
  }
  .push.wide {
    width: auto;
    padding: 0 10px;
  }
  .push.default {
    border-color: #000;
    box-shadow: inset 1px 1px #fff, inset -1px -1px #404040;
  }
  .push.square {
    width: 25px;
    margin-left: 2px;
    padding: 3px;
  }

  /* status and task bar */
  .status {
    height: 22px;
    padding: 0 2px;
    border-top: 2px solid #fff;
    line-height: 20px;
  }
  .taskbar {
    display: flex;
    align-items: center;
    height: 29px;
    padding: 0 8px 2px 2px;
    border-top: 1px solid #fff;
  }
  .start, .tasks button {
    display: flex;
    align-items: center;
    height: 24px;
    border: 1px solid;
    border-color: #fff #404040 #404040 #fff;
    box-shadow: inset -1px -1px #808080;
  }
  .start {
    gap: 2px;
    padding: 0 3px 0 1px;
    font-size: 12px;
  }
  .quick {
    display: flex;
    gap: 6px;
    height: 22px;
    align-items: center;
    margin-left: 9px;
    padding: 0 12px 0 7px;
    border: 1px solid;
    border-color: transparent #808080 transparent #808080;
    box-shadow: 1px 0 #fff, inset 1px 0 #fff;
  }
  .tasks {
    flex: 1;
    display: flex;
    gap: 4px;
    margin-left: 4px;
    margin-right: 10px;
  }
  .tasks button {
    flex: 1;
    min-width: 0;
    gap: 3px;
    padding: 0 2px 0 3px;
    white-space: nowrap;
    overflow: hidden;
  }
  .tasks .active {
    border-color: #404040 #fff #fff #404040;
    box-shadow: none;
    background: repeating-conic-gradient(#fff 0 25%, #d4d0c8 0 50%) 0 0 / 2px 2px;
  }
  .cjk {
    font-size: 12px;
  }
  .tray {
    display: flex;
    align-items: center;
    gap: 6px;
    height: 22px;
    padding: 0 2px 0 7px;
    border-left: 1px solid #808080;
    box-shadow: inset 1px 0 #fff;
  }
  .watermark {
    position: absolute;
    right: 4px;
    bottom: 0;
    width: 152px;
    display: flex;
    flex-direction: column;
    align-items: center;
    color: rgba(90, 90, 90, 0.7);
    font: 18px/27px "Liberation Sans", "Noto Sans CJK SC", sans-serif;
    pointer-events: none;
  }
  .watermark strong {
    width: 100%;
    height: 27px;
    background: rgba(225, 225, 220, 0.5);
    font-size: 22px;
    font-weight: 500;
    text-align: center;
  }
</style>
